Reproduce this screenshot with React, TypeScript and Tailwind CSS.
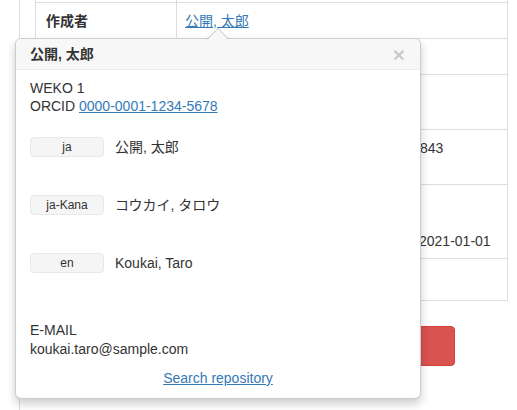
import React from "react";

const font = { fontFamily: '"Liberation Sans", Arial, "Noto Sans CJK JP", sans-serif' };

function Row({
  h,
  label,
  children,
  top = true,
}: {
  h: string;
  label?: string;
  children?: React.ReactNode;
  top?: boolean;
}) {
  return (
    <div className={`flex ${h} ${top ? "border-t border-[#ddd]" : ""}`}>
      <div className="w-[140px] shrink-0 px-[10px] py-[8px] font-bold text-[#333]">{label}</div>
      <div className="flex-1 border-l border-[#ddd] px-[8px] py-[8px]">{children}</div>
    </div>
  );
}

function LangRow({ lang, name }: { lang: string; name: string }) {
  return (
    <div className="flex items-center h-[20px]">
      <span className="flex h-[20px] w-[74px] items-center justify-center rounded-[4px] border border-[#e8e8e8] bg-[#f5f5f5] text-[12px] text-[#333]">
        {lang}
      </span>
      <span className="ml-[11px] text-[14px] text-[#333]">{name}</span>
    </div>
  );
}

export default function App() {
  return (
    <div className="relative h-[410px] w-[517px] overflow-hidden bg-white text-[14px] leading-[20px] text-[#333]" style={font}>
      <div className="ml-[19px] h-full border-l border-[#ddd] pl-[15px]">
        <div className="w-[473px] border-x border-b border-[#ddd]">
          <Row h="h-[2px]" top={false} />
          <Row h="h-[36px]" label="作成者">
            <a className="text-[#337ab7] underline">公開, 太郎</a>
          </Row>
          <Row h="h-[36px]" />
          <Row h="h-[55px]" />
          <Row h="h-[55px]">
            <div className="pl-[235px]">843</div>
          </Row>
          <Row h="h-[74px]">
            <div className="pl-[234px] pt-[38px]">2021-01-01</div>
          </Row>
          <Row h="h-[42px]" />
        </div>
        <button className="ml-[300px] mt-[25px] h-[40px] w-[120px] rounded-[4px] border border-[#d43f3a] bg-[#d9534f]" />
      </div>

      {/* popover */}
      <div className="absolute left-[15px] top-[38px] flex h-[361px] w-[406px] flex-col rounded-[6px] border border-black/20 bg-white shadow-[0_5px_10px_rgba(0,0,0,0.2)]">
        <div className="absolute left-[191px] top-[-11px] h-0 w-0 border-x-[11px] border-b-[11px] border-x-transparent border-b-black/25" />
        <div className="absolute left-[192px] top-[-10px] h-0 w-0 border-x-[10px] border-b-[10px] border-x-transparent border-b-[#f7f7f7]" />
        <div className="flex h-[31px] items-center justify-between rounded-t-[5px] border-b border-[#ebebeb] bg-[#f7f7f7] pl-[14px] pr-[15px]">
          <span className="font-bold">公開, 太郎</span>
          <span className="text-[21px] font-bold leading-none text-black/20">×</span>
        </div>
        <div className="flex flex-1 flex-col px-[14px] pt-[9px] leading-[18px]">
          <div>WEKO 1</div>
          <div>
            ORCID <a className="text-[#337ab7] underline">0000-0001-1234-5678</a>
          </div>
          <div className="mt-[22px] flex flex-col gap-[38px]">
            <LangRow lang="ja" name="公開, 太郎" />
            <LangRow lang="ja-Kana" name="コウカイ, タロウ" />
            <LangRow lang="en" name="Koukai, Taro" />
          </div>
          <div className="mt-[48px]">E-MAIL</div>
          <div className="mt-px">koukai.taro@sample.com</div>
          <div className="mt-[11px] text-center">
            <a className="text-[#337ab7] underline">Search repository</a>
          </div>
        </div>
      </div>
    </div>
  );
}
